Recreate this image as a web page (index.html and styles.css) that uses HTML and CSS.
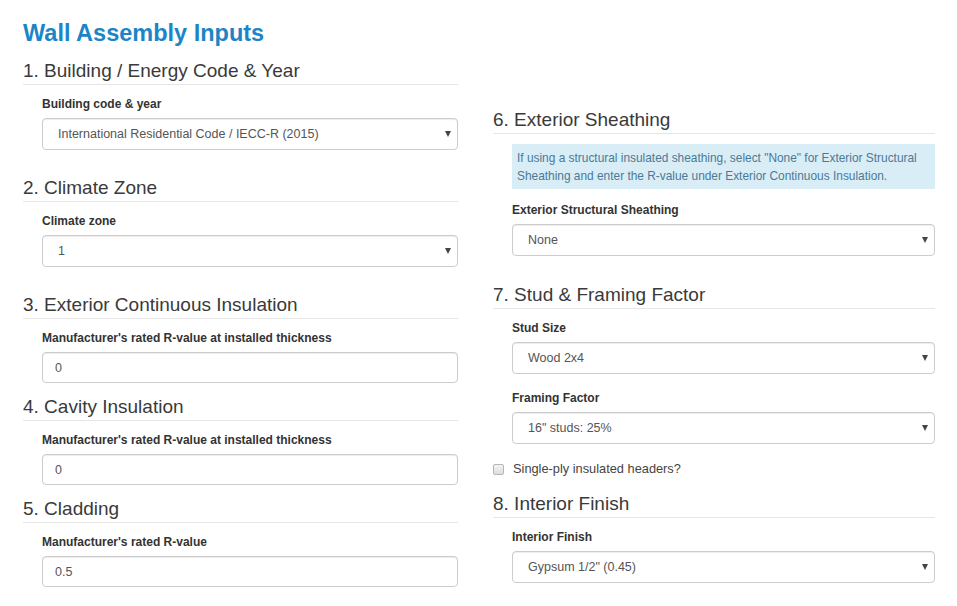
FILE: index.html
```html
<!DOCTYPE html>
<html>
<head>
<meta charset="utf-8">
<link rel="stylesheet" href="styles.css">
</head>
<body>
<div class="page">
  <h1 class="title">Wall Assembly Inputs</h1>
  <div class="columns">
    <div class="col col-left">
      <h3 class="sec">1. Building / Energy Code &amp; Year</h3>
      <div class="field">
        <label class="lbl">Building code &amp; year</label>
        <div class="select-wrap"><select class="ctrl sel"><option>International Residential Code / IECC-R (2015)</option></select></div>
      </div>

      <h3 class="sec">2. Climate Zone</h3>
      <div class="field">
        <label class="lbl">Climate zone</label>
        <div class="select-wrap"><select class="ctrl sel"><option>1</option></select></div>
      </div>

      <h3 class="sec">3. Exterior Continuous Insulation</h3>
      <div class="field tight">
        <label class="lbl">Manufacturer's rated R-value at installed thickness</label>
        <input class="ctrl inp" type="text" value="0">
      </div>

      <h3 class="sec">4. Cavity Insulation</h3>
      <div class="field tight">
        <label class="lbl">Manufacturer's rated R-value at installed thickness</label>
        <input class="ctrl inp" type="text" value="0">
      </div>

      <h3 class="sec">5. Cladding</h3>
      <div class="field tight">
        <label class="lbl">Manufacturer's rated R-value</label>
        <input class="ctrl inp" type="text" value="0.5">
      </div>
    </div>

    <div class="col col-right">
      <h3 class="sec">6. Exterior Sheathing</h3>
      <div class="info">If using a structural insulated sheathing, select "None" for Exterior Structural Sheathing and enter the R-value under Exterior Continuous Insulation.</div>
      <div class="field">
        <label class="lbl">Exterior Structural Sheathing</label>
        <div class="select-wrap"><select class="ctrl sel"><option>None</option></select></div>
      </div>

      <h3 class="sec">7. Stud &amp; Framing Factor</h3>
      <div class="field mid">
        <label class="lbl">Stud Size</label>
        <div class="select-wrap"><select class="ctrl sel"><option>Wood 2x4</option></select></div>
      </div>
      <div class="field mid">
        <label class="lbl">Framing Factor</label>
        <div class="select-wrap"><select class="ctrl sel"><option>16" studs: 25%</option></select></div>
      </div>
      <label class="check"><input type="checkbox" class="cb"><span>Single-ply insulated headers?</span></label>

      <h3 class="sec">8. Interior Finish</h3>
      <div class="field">
        <label class="lbl">Interior Finish</label>
        <div class="select-wrap"><select class="ctrl sel"><option>Gypsum 1/2" (0.45)</option></select></div>
      </div>
    </div>
  </div>
</div>
</body>
</html>
```

FILE: styles.css
```css
* { box-sizing: border-box; }
html, body { margin: 0; padding: 0; background: #fff; }
body {
  font-family: "Liberation Sans", Arial, sans-serif;
  color: #333;
}
.page {
  padding: 19px 0 0 23px;
  width: 935px;
}
.title {
  margin: 0;
  font-size: 23.5px;
  line-height: 28px;
  font-weight: bold;
  color: #1b85c7;
}
.columns {
  display: grid;
  grid-template-columns: 435px 442px;
  column-gap: 35px;
  margin-top: 12px;
}
.col-right { padding-top: 49px; }
.sec {
  margin: 0;
  font-size: 19px;
  font-weight: normal;
  line-height: 22px;
  padding-top: 1px;
  padding-bottom: 2px;
  border-bottom: 1px solid #e6e6e6;
  color: #3a3a3a;
}
.field {
  padding-left: 19px;
  margin-bottom: 26px;
}
.col-right .field { margin-bottom: 27px; }
.sec + .field { margin-top: 11px; }
.field.tight { margin-bottom: 12px; }
.col-right .field.mid { margin-bottom: 16px; }
.lbl {
  display: block;
  font-size: 12px;
  font-weight: bold;
  line-height: 16px;
  margin-bottom: 6px;
  color: #333;
}
.ctrl {
  display: block;
  width: 100%;
  height: 32px;
  border: 1px solid #ccc;
  border-radius: 4px;
  background: #fff;
  box-shadow: inset 0 1px 1px rgba(0,0,0,.075);
  font-family: "Liberation Sans", Arial, sans-serif;
  font-size: 12.5px;
  color: #555;
  margin: 0;
}
.sel {
  -webkit-appearance: none;
  appearance: none;
  padding: 0 24px 0 15px;
}
.inp {
  height: 31px;
  padding: 0 12px;
}
.select-wrap { position: relative; }
.select-wrap::after {
  content: "";
  position: absolute;
  right: 7px;
  top: 13px;
  border-left: 3.5px solid transparent;
  border-right: 3.5px solid transparent;
  border-top: 6px solid #444;
  pointer-events: none;
}
.info {
  margin: 10px 0 13px 19px;
  background: #d9edf7;
  color: #4a7a96;
  font-size: 11.9px;
  line-height: 18px;
  padding: 5px 5px 4px 5px;
}
.check {
  display: flex;
  align-items: center;
  font-size: 12.8px;
  line-height: 16px;
  color: #444;
  margin: 17px 0 15px 0;
}
.cb {
  -webkit-appearance: none;
  appearance: none;
  width: 11px;
  height: 11px;
  margin: 0 9px 0 0;
  border: 1px solid #b5b5b5;
  border-radius: 2px;
  background: linear-gradient(#f4f4f4, #dedede);
}
```
